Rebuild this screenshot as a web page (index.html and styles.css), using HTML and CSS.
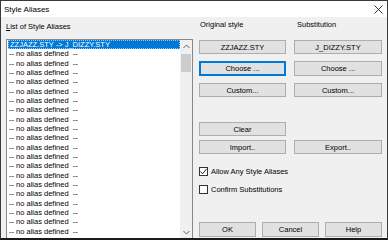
FILE: index.html
```html
<!DOCTYPE html>
<html lang="en">
<head>
  <meta charset="UTF-8" />
  <title>Style Aliases</title>
  <link rel="stylesheet" href="styles.css">
</head>
<body>
  <div class="window">
    <div class="titlebar">
      <span class="title">Style Aliases</span>
      <svg class="close" width="9" height="9" viewBox="0 0 9 9">
        <path d="M0.5 0.5L8.5 8.5M8.5 0.5L0.5 8.5" stroke="#1a1a1a" stroke-width="0.9" fill="none"/>
      </svg>
    </div>

    <div class="content">
      <div class="aliases">
        <div class="label"><u>L</u>ist of Style Aliases</div>
        <div class="listbox">
          <ul class="items">
            <li class="selected"><span>ZZJAZZ.STY -&gt; J_DIZZY.STY</span></li>
            <li>-- no alias defined&nbsp; --</li>
            <li>-- no alias defined&nbsp; --</li>
            <li>-- no alias defined&nbsp; --</li>
            <li>-- no alias defined&nbsp; --</li>
            <li>-- no alias defined&nbsp; --</li>
            <li>-- no alias defined&nbsp; --</li>
            <li>-- no alias defined&nbsp; --</li>
            <li>-- no alias defined&nbsp; --</li>
            <li>-- no alias defined&nbsp; --</li>
            <li>-- no alias defined&nbsp; --</li>
            <li>-- no alias defined&nbsp; --</li>
            <li>-- no alias defined&nbsp; --</li>
            <li>-- no alias defined&nbsp; --</li>
            <li>-- no alias defined&nbsp; --</li>
            <li>-- no alias defined&nbsp; --</li>
            <li>-- no alias defined&nbsp; --</li>
            <li>-- no alias defined&nbsp; --</li>
            <li>-- no alias defined&nbsp; --</li>
            <li>-- no alias defined&nbsp; --</li>
            <li>-- no alias defined&nbsp; --</li>
          </ul>
          <div class="scrollbar">
            <span class="arrow">
              <svg width="7" height="5" viewBox="0 0 7 5"><path d="M0.5 4L3.5 1L6.5 4" stroke="#606060" stroke-width="1" fill="none"/></svg>
            </span>
            <span class="thumb"></span>
            <span class="track"></span>
            <span class="arrow">
              <svg width="7" height="5" viewBox="0 0 7 5"><path d="M0.5 1L3.5 4L6.5 1" stroke="#606060" stroke-width="1" fill="none"/></svg>
            </span>
          </div>
        </div>
      </div>

      <div class="controls">
        <div class="pair headings">
          <span>Original style</span>
          <span>Substitution</span>
        </div>
        <div class="pair styles">
          <button>ZZJAZZ.STY</button>
          <button>J_DIZZY.STY</button>
        </div>
        <div class="pair choose">
          <button class="default">Choose ...</button>
          <button>Choose ...</button>
        </div>
        <div class="pair custom">
          <button>Custom...</button>
          <button>Custom...</button>
        </div>
        <div class="pair clear">
          <button>Clear</button>
        </div>
        <div class="pair transfer">
          <button>Import..</button>
          <button>Export..</button>
        </div>
        <label class="check allow">
          <span class="box">
            <svg width="7" height="7" viewBox="0 0 7 7"><path d="M0.5 3.5L2.6 5.8L6.6 0.8" stroke="#222" stroke-width="1" fill="none"/></svg>
          </span>
          Allow Any Style Aliases
        </label>
        <label class="check confirm">
          <span class="box"></span>
          Confirm Substitutions
        </label>
        <div class="actions">
          <button>OK</button>
          <button>Cancel</button>
          <button>Help</button>
        </div>
      </div>
    </div>
  </div>
</body>
</html>
```

FILE: styles.css
```css
* {
  box-sizing: border-box;
}

body {
  margin: 0;
  font-family: "Liberation Sans", Arial, sans-serif;
  font-size: 7.5px;
  color: #000;
  background: #fff;
}

.window {
  width: 388px;
  height: 240px;
  display: flex;
  flex-direction: column;
  border: 1px solid #3a3a3a;
  border-bottom: 2px solid #1a1a1a;
  background: #f0f0f0;
}

.titlebar {
  height: 16px;
  display: flex;
  align-items: center;
  justify-content: space-between;
  padding: 0 4px 0 3px;
  background: #fff;
}

.title {
  font-size: 8px;
}

.content {
  flex: 1;
  display: flex;
  gap: 6px;
  padding: 5px 3px 0 5px;
  min-height: 0;
}

/* left column */
.aliases {
  width: 187px;
  display: flex;
  flex-direction: column;
}

.label {
  height: 10px;
  line-height: 10px;
  margin-bottom: 7px;
}

.listbox {
  flex: 1;
  display: flex;
  min-height: 0;
  border: 1px solid #828790;
  border-bottom: none;
  background: #fff;
  overflow: hidden;
}

.items {
  flex: 1;
  margin: 0;
  padding: 0 0 0 1px;
  list-style: none;
}

.items li {
  height: 9.33px;
  line-height: 9.33px;
  padding-left: 1px;
  white-space: nowrap;
}

.items .selected {
  background: #0078d7;
  color: #fff;
  outline: 1px dotted #99c9ef;
  outline-offset: -1px;
  padding-left: 2px;
}

.scrollbar {
  width: 12px;
  display: flex;
  flex-direction: column;
  align-items: center;
  background: #f0f0f0;
}

.arrow {
  height: 12px;
  display: flex;
  align-items: center;
  justify-content: center;
}

.thumb {
  width: 10px;
  height: 18px;
  margin-top: 2px;
  background: #cdcdcd;
}

.track {
  flex: 1;
}

/* right column */
.controls {
  flex: 1;
  display: flex;
  flex-direction: column;
}

.pair {
  display: grid;
  grid-template-columns: 87px 88px;
  gap: 8px;
}

.headings {
  height: 10px;
  line-height: 10px;
  padding-left: 1px;
  margin-top: -2px;
}

.headings span + span {
  padding-left: 2px;
}

button {
  height: 14px;
  padding: 0;
  font-family: inherit;
  font-size: 7.5px;
  color: #000;
  background: #e1e1e1;
  border: 1px solid #adadad;
  border-radius: 0;
}

button.default {
  border-color: #0078d7;
  box-shadow: inset 0 0 0 1px #0078d7;
}

.styles {
  margin-top: 10px;
}

.choose {
  margin-top: 7px;
  height: 15px;
}

.choose button {
  height: 15px;
}

.custom {
  margin-top: 7px;
}

.clear {
  margin-top: 25px;
}

.transfer {
  margin-top: 4px;
}

.check {
  display: flex;
  align-items: center;
  gap: 3px;
  height: 9px;
}

.allow {
  margin-top: 13px;
}

.confirm {
  margin-top: 9px;
}

.box {
  width: 9px;
  height: 9px;
  display: flex;
  align-items: center;
  justify-content: center;
  border: 1px solid #333;
  background: #fff;
}

.actions {
  margin-top: auto;
  margin-bottom: 1px;
  display: grid;
  grid-template-columns: repeat(3, 57px);
  gap: 6px;
}

.actions button {
  height: 15px;
}
```
